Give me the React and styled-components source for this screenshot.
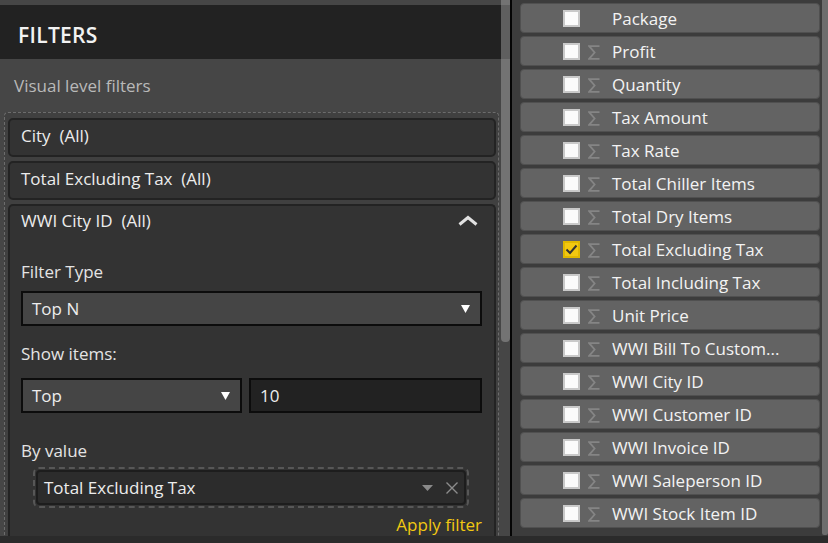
import React from "react";
import styled, { createGlobalStyle } from "styled-components";

const GlobalStyle = createGlobalStyle`
  html, body { margin: 0; padding: 0; background: #2b2b2b; }
  body { font-family: "Open Sans", "Noto Sans", sans-serif; -webkit-font-smoothing: antialiased; }
  * { box-sizing: border-box; }
`;

const Frame = styled.div`
  width: 828px;
  height: 543px;
  display: flex;
  flex-direction: column;
  overflow: hidden;
  background: #2b2b2b;
`;

const Main = styled.div`
  display: flex;
  height: 536px;
`;

const BottomBar = styled.div`
  height: 7px;
  background: #2b2b2b;
`;

const LeftPanel = styled.div`
  position: relative;
  width: 510px;
  display: flex;
  flex-direction: column;
  background: #464646;
  padding-top: 5px;
  overflow: hidden;
`;

const Header = styled.div`
  height: 54px;
  background: #222222;
  display: flex;
  align-items: center;
  padding: 6px 0 0 18px;
  color: #f2f2f2;
  font-size: 21px;
  font-weight: 600;
  letter-spacing: 0.3px;
`;

const SectionLabel = styled.div`
  height: 54px;
  display: flex;
  align-items: center;
  padding: 1px 0 0 14px;
  color: #b9b9b9;
  font-size: 17px;
`;

const DashedBox = styled.div`
  flex: 1;
  margin: 0 11px 0 4px;
  border: 1px dashed #6c6c6c;
  border-bottom: none;
  border-radius: 4px 4px 0 0;
  padding: 5px 2px 0 3px;
  display: flex;
  flex-direction: column;
  gap: 4px;
  background: #404040;
`;

const Card = styled.div`
  background: #333333;
  border: 2px solid #232323;
  border-radius: 5px;
  ${(p) => (p.$open ? "flex: 1; border-bottom: none; border-radius: 5px 5px 0 0;" : "height: 39px;")}
  display: flex;
  flex-direction: column;
`;

const CardHeader = styled.div`
  height: ${(p) => (p.$open ? "28px" : "31px")};
  display: flex;
  align-items: center;
  justify-content: space-between;
  padding: 0 16px 0 11px;
  color: #ececec;
  font-size: 17px;
  white-space: pre;
`;

const CardBody = styled.div`
  padding: 27px 12px 0 11px;
  display: flex;
  flex-direction: column;
`;

const FieldLabel = styled.div`
  height: 22px;
  line-height: 22px;
  color: #e4e4e4;
  font-size: 17px;
  margin-top: ${(p) => p.$mt || 0}px;
`;

const Row = styled.div`
  display: flex;
  gap: 7px;
  margin-top: ${(p) => p.$mt || 0}px;
`;

const SelectBox = styled.div`
  height: 35px;
  width: ${(p) => (p.$w ? `${p.$w}px` : "100%")};
  flex: ${(p) => (p.$grow ? 1 : "none")};
  margin-top: ${(p) => p.$mt || 0}px;
  background: ${(p) => (p.$input ? "#222222" : "#454545")};
  border: 2px solid #0c0c0c;
  display: flex;
  align-items: center;
  justify-content: space-between;
  padding: 0 10px 0 9px;
  color: #ededed;
  font-size: 17px;
`;

const ValueOuter = styled.div`
  margin: 5px 13px 0 12px;
  border: 2px dashed #575757;
  border-radius: 6px;
  padding: 1px;
`;

const ValueInner = styled.div`
  height: 35px;
  background: #2c2c2c;
  border: 2px solid #1d1d1d;
  border-radius: 4px;
  display: flex;
  align-items: center;
  padding: 0 6px;
  color: #ececec;
  font-size: 17px;
`;

const ValueText = styled.span`
  flex: 1;
`;

const ValueIcons = styled.span`
  display: flex;
  align-items: center;
  gap: 13px;
`;

const ApplyLink = styled.div`
  align-self: flex-end;
  margin-top: 6px;
  height: 22px;
  line-height: 22px;
  color: #f2c811;
  font-size: 17px;
`;

const ScrollThumb = styled.div`
  position: absolute;
  top: 0;
  right: 0;
  width: 9px;
  height: 342px;
  background: rgba(170, 170, 170, 0.45);
  border-radius: 0 0 4px 4px;
`;

const Divider = styled.div`
  width: 2px;
  background: #050505;
`;

const RightPanel = styled.div`
  flex: 1;
  display: flex;
  background: #3c3c3c;
  padding: 3px 0 0 8px;
`;

const FieldList = styled.div`
  width: 300px;
  display: flex;
  flex-direction: column;
  gap: 3px;
`;

const RightScroll = styled.div`
  width: 6px;
  margin-left: 2px;
  margin-top: -3px;
  height: 535px;
  background: #6d6d6d;
  border-radius: 0 0 2px 2px;
`;

const FieldItem = styled.div`
  height: 30px;
  background: #636363;
  border: 1px solid #505050;
  border-radius: 4px;
  display: flex;
  align-items: center;
  padding: 1px 0 0 42px;
  color: #f3f3f3;
  font-size: 17px;
`;

const Check = styled.span`
  width: 17px;
  height: 17px;
  flex: none;
  background: ${(p) => (p.$on ? "#f2c811" : "#fbfbfb")};
  border: 2px solid ${(p) => (p.$on ? "#e0b800" : "#c9c9c9")};
  display: flex;
  align-items: center;
  justify-content: center;
`;

const SigmaSlot = styled.span`
  width: 12px;
  height: 15px;
  margin: 2px 12px 0 8px;
  flex: none;
  display: flex;
  visibility: ${(p) => (p.$hide ? "hidden" : "visible")};
`;

const FieldName = styled.span`
  white-space: nowrap;
`;

const SigmaIcon = () => (
  <svg width="12" height="15" viewBox="0 0 12 15">
    <path d="M11.5 1.2 H1.2 L6.6 7.5 L1.2 13.8 H11.5" fill="none" stroke="#858585" strokeWidth="1.8" strokeLinejoin="miter" />
  </svg>
);

const Chevron = () => (
  <svg width="20" height="11" viewBox="0 0 20 11">
    <path d="M1.5 9.5 L10 2.5 L18.5 9.5" fill="none" stroke="#e2e2e2" strokeWidth="3" strokeLinejoin="miter" />
  </svg>
);

const Caret = ({ color = "#ffffff", w = 9, h = 8 }) => (
  <svg width={w} height={h} viewBox={`0 0 ${w} ${h}`}>
    <polygon points={`0,0 ${w},0 ${w / 2},${h}`} fill={color} />
  </svg>
);

const CloseX = () => (
  <svg width="12" height="12" viewBox="0 0 12 12">
    <path d="M0.5 0.5 L11.5 11.5 M11.5 0.5 L0.5 11.5" stroke="#8c8c8c" strokeWidth="1.4" />
  </svg>
);

const CheckMark = () => (
  <svg width="13" height="11" viewBox="0 0 13 11">
    <path d="M1.5 5.5 L5 9 L11.5 1.5" fill="none" stroke="#333" strokeWidth="2" />
  </svg>
);

const fields = [
  { name: "Package", sigma: false },
  { name: "Profit" },
  { name: "Quantity" },
  { name: "Tax Amount" },
  { name: "Tax Rate" },
  { name: "Total Chiller Items" },
  { name: "Total Dry Items" },
  { name: "Total Excluding Tax", checked: true },
  { name: "Total Including Tax" },
  { name: "Unit Price" },
  { name: "WWI Bill To Custom..." },
  { name: "WWI City ID" },
  { name: "WWI Customer ID" },
  { name: "WWI Invoice ID" },
  { name: "WWI Saleperson ID" },
  { name: "WWI Stock Item ID" },
];

export default function App() {
  return (
    <Frame>
      <GlobalStyle />
      <Main>
        <LeftPanel>
          <Header>FILTERS</Header>
          <SectionLabel>Visual level filters</SectionLabel>
          <DashedBox>
            <Card>
              <CardHeader>{"City  (All)"}</CardHeader>
            </Card>
            <Card>
              <CardHeader>{"Total Excluding Tax  (All)"}</CardHeader>
            </Card>
            <Card $open>
              <CardHeader $open>
                <span>{"WWI City ID  (All)"}</span>
                <Chevron />
              </CardHeader>
              <CardBody>
                <FieldLabel>Filter Type</FieldLabel>
                <SelectBox $mt={8}>
                  <span>Top N</span>
                  <Caret />
                </SelectBox>
                <FieldLabel $mt={17}>Show items:</FieldLabel>
                <Row $mt={13}>
                  <SelectBox $w={221}>
                    <span>Top</span>
                    <Caret />
                  </SelectBox>
                  <SelectBox $grow $input>
                    <span>10</span>
                  </SelectBox>
                </Row>
                <FieldLabel $mt={27}>By value</FieldLabel>
                <ValueOuter>
                  <ValueInner>
                    <ValueText>Total Excluding Tax</ValueText>
                    <ValueIcons>
                      <Caret color="#8a8a8a" w={11} h={6} />
                      <CloseX />
                    </ValueIcons>
                  </ValueInner>
                </ValueOuter>
                <ApplyLink>Apply filter</ApplyLink>
              </CardBody>
            </Card>
          </DashedBox>
          <ScrollThumb />
        </LeftPanel>
        <Divider />
        <RightPanel>
          <FieldList>
            {fields.map((f) => (
              <FieldItem key={f.name}>
                <Check $on={f.checked}>{f.checked && <CheckMark />}</Check>
                <SigmaSlot $hide={f.sigma === false}>
                  <SigmaIcon />
                </SigmaSlot>
                <FieldName>{f.name}</FieldName>
              </FieldItem>
            ))}
          </FieldList>
          <RightScroll />
        </RightPanel>
      </Main>
      <BottomBar />
    </Frame>
  );
}
